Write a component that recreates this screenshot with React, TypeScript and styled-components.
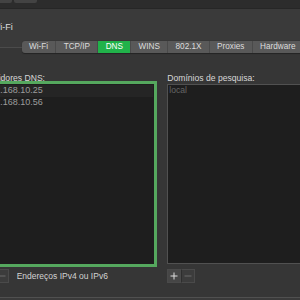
import React from "react";
import styled, { createGlobalStyle } from "styled-components";

const Global = createGlobalStyle`
  html, body { margin: 0; padding: 0; background: #3a3a3a; overflow: hidden; }
  body { font-family: "Liberation Sans", Arial, sans-serif; }
`;

const Window = styled.div`
  width: 300px;
  height: 300px;
  overflow: hidden;
  background: #3a3a3a;
  display: flex;
  flex-direction: column;
`;

const TopBar = styled.div`
  height: 8px;
  flex: none;
  background: #2c2c2c;
  border-bottom: 1px solid #262626;
  display: flex;
  align-items: flex-start;
  gap: 2px;
`;

const TopButton = styled.div<{ $w: number; $ml?: number }>`
  width: ${(p) => p.$w}px;
  margin-left: ${(p) => p.$ml ?? 0}px;
  height: 3px;
  background: #434343;
  border-radius: 0 0 2px 2px;
`;

const TitleRow = styled.div`
  height: 28px;
  padding-top: 4px;
  flex: none;
  display: flex;
  align-items: center;
`;

const Title = styled.span`
  margin-left: -8.2px;
  font-size: 9px;
  color: #dedede;
  line-height: 11px;
`;

const Content = styled.div`
  margin-left: -19px;
  width: 380px;
  display: flex;
  flex-direction: column;
`;

const TabStrip = styled.div`
  position: relative;
  z-index: 1;
  display: flex;
  padding-left: 40.7px;
  height: 12px;
`;

const TabGroup = styled.div`
  display: flex;
  border-radius: 3px;
  overflow: hidden;
  background: #595959;
  box-shadow: 0 0.5px 1px rgba(0, 0, 0, 0.35);
`;

const Tab = styled.div<{ $active?: boolean }>`
  padding: 0 7.3px;
  height: 12px;
  line-height: 12px;
  font-size: 8.2px;
  color: ${(p) => (p.$active ? "#ffffff" : "#dcdcdc")};
  background: ${(p) => (p.$active ? "#21b24a" : "transparent")};
  & + & {
    border-left: 1px solid #4a4a4a;
  }
`;

const Box = styled.div`
  margin-top: -6px;
  background: #363636;
  border-top: 1px solid #4b4b4b;
  border-bottom: 1px solid #505050;
  padding: 24.5px 0 13.2px 0;
  display: grid;
  grid-template-columns: 172.5px 172.5px;
  column-gap: 13.8px;
`;

const Column = styled.div`
  display: flex;
  flex-direction: column;
`;

const Label = styled.div`
  font-size: 8.6px;
  line-height: 10px;
  height: 10px;
  color: #d8d8d8;
  margin-bottom: 1.8px;
`;

const List = styled.div<{ $focused?: boolean }>`
  height: 179.7px;
  box-sizing: border-box;
  background: #1e1e1e;
  border: 1px solid ${(p) => (p.$focused ? "#1e1e1e" : "#515151")};
  outline: ${(p) => (p.$focused ? "3px solid #55a85e" : "none")};
  outline-offset: -0.5px;
  display: flex;
  flex-direction: column;
`;

const Row = styled.div<{ $alt?: boolean }>`
  height: 12px;
  line-height: 11px;
  padding-left: 3.2px;
  font-size: 9px;
  color: #9c9c9c;
  background: ${(p) => (p.$alt ? "#252525" : "transparent")};
`;

const Placeholder = styled.div`
  height: 12px;
  line-height: 11px;
  padding-left: 1px;
  font-size: 8.6px;
  color: #656565;
`;

const BottomRow = styled.div`
  margin-top: 5.5px;
  height: 14px;
  display: flex;
  align-items: center;
  gap: 7.7px;
`;

const ButtonPair = styled.div`
  display: flex;
  height: 14px;
`;

const SmallButton = styled.div<{ $disabled?: boolean; $lit?: boolean }>`
  width: 14px;
  height: 13.5px;
  box-sizing: border-box;
  border: 1px solid #4a4a4a;
  background: ${(p) => (p.$lit ? "#464646" : "#3c3c3c")};
  display: flex;
  align-items: center;
  justify-content: center;
  color: ${(p) => (p.$disabled ? "#6a6a6a" : "#dddddd")};
  & + & {
    border-left: 1px solid #2e2e2e;
  }
`;

const Hint = styled.span`
  font-size: 8.5px;
  color: #d2d2d2;
  line-height: 10px;
`;

const Plus = () => (
  <svg width="8" height="8" viewBox="0 0 8 8">
    <path d="M4 0.5V7.5M0.5 4H7.5" stroke="currentColor" strokeWidth="1" />
  </svg>
);

const Minus = () => (
  <svg width="8" height="8" viewBox="0 0 8 8">
    <path d="M0.5 4H7.5" stroke="currentColor" strokeWidth="1" />
  </svg>
);

const tabs = ["Wi-Fi", "TCP/IP", "DNS", "WINS", "802.1X", "Proxies", "Hardware"];
const servers = ["192.168.10.25", "192.168.10.56"];

export default function App() {
  return (
    <>
      <Global />
      <Window>
        <TopBar>
          <TopButton $w={20} $ml={-8} />
          <TopButton $w={23} />
        </TopBar>
        <TitleRow>
          <Title>Wi-Fi</Title>
        </TitleRow>
        <Content>
          <TabStrip>
            <TabGroup>
              {tabs.map((t) => (
                <Tab key={t} $active={t === "DNS"}>
                  {t}
                </Tab>
              ))}
            </TabGroup>
          </TabStrip>
          <Box>
            <Column>
              <Label>Servidores DNS:</Label>
              <List $focused>
                {servers.map((s, i) => (
                  <Row key={s} $alt={i === 0}>
                    {s}
                  </Row>
                ))}
              </List>
              <BottomRow>
                <ButtonPair>
                  <SmallButton>
                    <Plus />
                  </SmallButton>
                  <SmallButton $disabled>
                    <Minus />
                  </SmallButton>
                </ButtonPair>
                <Hint>Endereços IPv4 ou IPv6</Hint>
              </BottomRow>
            </Column>
            <Column>
              <Label>Domínios de pesquisa:</Label>
              <List>
                <Placeholder>local</Placeholder>
              </List>
              <BottomRow>
                <ButtonPair>
                  <SmallButton $lit>
                    <Plus />
                  </SmallButton>
                  <SmallButton $disabled>
                    <Minus />
                  </SmallButton>
                </ButtonPair>
              </BottomRow>
            </Column>
          </Box>
        </Content>
      </Window>
    </>
  );
}
